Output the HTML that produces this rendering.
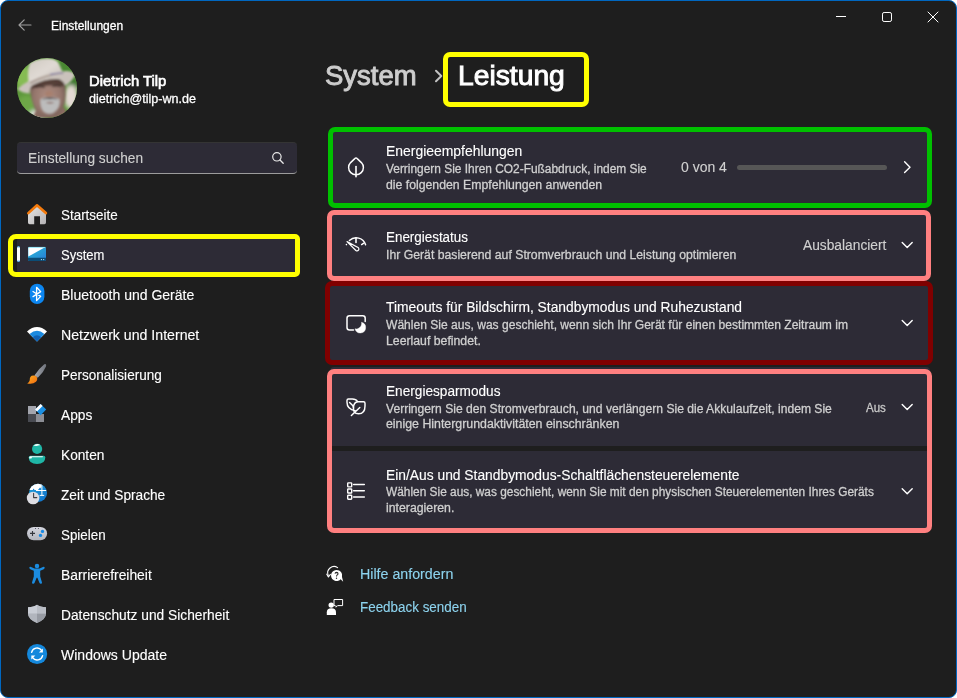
<!DOCTYPE html>
<html lang="de">
<head>
<meta charset="utf-8">
<title>Einstellungen – System › Leistung</title>
<style>
html,body{margin:0;padding:0;background:#fff}
body{width:957px;height:698px;overflow:hidden;position:relative;font-family:"Liberation Sans",sans-serif}
#frame{position:absolute;left:0;top:0;width:955px;height:696px;border:1px solid #0067c0;border-radius:8px;background:#1e1e1e}
#ui{position:absolute;left:0;top:0;width:957px;height:698px}
#ui *{box-sizing:border-box}
.t{position:absolute;white-space:nowrap;line-height:20px;color:#fff;transform-origin:0 50%;display:block;-webkit-text-stroke:0.12px currentColor}
.s12{-webkit-text-stroke:0.28px currentColor}
.abs{position:absolute}
svg{position:absolute;overflow:visible}
.card{position:absolute;left:330px;width:600px;background:#2d2b36;border-radius:4px}
.hl{position:absolute;border-style:solid;border-width:5px;border-radius:8px;pointer-events:none}
ul{list-style:none;margin:0;padding:0}
h1,p{margin:0;font-weight:normal}
a{text-decoration:none}
.sb{-webkit-text-stroke:0.95px currentColor}
.sb2{-webkit-text-stroke:0.6px currentColor}
</style>
</head>
<body>
<div id="frame"></div>
<div id="ui">

<!-- ===== title bar ===== -->
<header>
  <svg class="back" style="left:18px;top:19px" width="14" height="12" viewBox="0 0 14 12"><path d="M6.2 0.8 L1 6 L6.2 11.2 M1.2 6 H13" fill="none" stroke="#9d9d9d" stroke-width="1.2" stroke-linecap="round" stroke-linejoin="round"/></svg>
  <span class="t s12" id="tb" style="left:51.00px;top:16.14px;font-size:12px;transform:scaleX(1.0005);">Einstellungen</span>
  <svg style="left:830px;top:6px" width="120" height="22" viewBox="830 6 120 22">
    <path d="M836 16.5 H846" stroke="#fff" stroke-width="1"/>
    <rect x="882.5" y="12.5" width="9" height="9" rx="1.6" fill="none" stroke="#fff" stroke-width="1"/>
    <path d="M928 12 L938 22 M938 12 L928 22" stroke="#fff" stroke-width="1" stroke-linecap="round"/>
  </svg>
</header>

<!-- ===== sidebar ===== -->
<aside>
  <section class="profile">
    <!--AVATAR_BEGIN-->
<svg class="avatar" style="left:17px;top:58px" width="60" height="60" viewBox="0 0 60 60">
  <defs>
    <clipPath id="cAv"><circle cx="30" cy="30" r="30"/></clipPath>
    <radialGradient id="gFace" cx="0.5" cy="0.5" r="0.62"><stop offset="0" stop-color="#b08e82"/><stop offset="0.6" stop-color="#94766c"/><stop offset="1" stop-color="#66504a"/></radialGradient>
    <linearGradient id="gHat" x1="0" y1="0" x2="1" y2="1"><stop offset="0" stop-color="#cfc8c0"/><stop offset="0.5" stop-color="#e0dad4"/><stop offset="1" stop-color="#c2bab4"/></linearGradient>
    <filter id="fBlur" x="-10%" y="-10%" width="120%" height="120%"><feGaussianBlur stdDeviation="0.8"/></filter>
    <filter id="fBlur2" x="-20%" y="-20%" width="140%" height="140%"><feGaussianBlur stdDeviation="2.2"/></filter>
  </defs>
  <g clip-path="url(#cAv)">
    <rect width="60" height="60" fill="#5c963a"/>
    <g filter="url(#fBlur2)">
      <ellipse cx="7" cy="20" rx="9" ry="12" fill="#86bc52"/>
      <ellipse cx="10" cy="46" rx="10" ry="9" fill="#6ea846"/>
      <ellipse cx="50" cy="9" rx="10" ry="9" fill="#4a8830"/>
      <ellipse cx="56" cy="26" rx="6" ry="7" fill="#3a782a"/>
      <ellipse cx="54" cy="39" rx="7" ry="12" fill="#e4dad4"/>
      <ellipse cx="20" cy="57" rx="8" ry="5" fill="#e8e8e8"/>
    </g>
    <g filter="url(#fBlur)">
      <path d="M16 60 Q18 51 23 49 H46 Q50 52 50 60 Z" fill="#8a6c62"/>
      <!-- face -->
      <path d="M12.500 28 Q11.500 19 22 17 H41 Q49 19 48.500 30 Q49.500 44 45 52 Q40 60 31 60 Q22 60 17.500 50 Q13.500 40 12.500 28 Z" fill="url(#gFace)"/>
      <!-- shadow under brim / eyes -->
      <path d="M13.500 24 Q30 17 47.500 21 L48 28 Q30 25.500 14 31 Z" fill="#46322c" opacity="0.8"/>
      <path d="M18 29.500 Q23 27.500 28 29.500 M35 28.500 Q40 27 45 28.500" stroke="#2e2220" stroke-width="1.300" fill="none" opacity="0.8"/>
      <ellipse cx="32" cy="36" rx="3.600" ry="3.200" fill="#a8806e"/>
      <!-- beard -->
      <path d="M23.500 41 Q32 36.500 42.500 41 Q44 50 36 55 Q31 57 26.500 53.500 Q22.500 48 23.500 41 Z" fill="#bcbcbc"/>
      <path d="M24.500 41.500 Q32.500 36.800 41.500 41.500 Q37 40.600 33 41.200 Q28 40.800 24.500 41.500 Z" fill="#564a4a"/>
      <path d="M28.500 44.600 Q33 43.200 37.500 44.600 Q33 46.600 28.500 44.600 Z" fill="#86625a"/>
      <!-- hat brim -->
      <path d="M0.500 31 Q8 23.500 22 19 Q38 13.500 50 13 Q57 13.500 58 17 Q55 24 48 27.500 Q46 21.500 40 21 Q28 20.500 16 27 Q12 29.500 12.500 35.500 Q5 35 0.500 31 Z" fill="#cac2bc"/>
      <!-- hat crown -->
      <path d="M11.500 24 Q10 10 13 5 Q20 0 32 0.500 Q40 1 42 6 L46 15 Q30 15.500 11.500 24 Z" fill="url(#gHat)"/>
      <!-- hat band shadow -->
      <path d="M13 24 Q28 15.500 46 14.200 L46.400 15.600 Q28 17.500 13.200 26 Z" fill="#8a7468" opacity="0.55"/>
      <path d="M33 15.800 Q40 14.400 46 14.200 L46.400 15.600 Q40 15.800 33.400 17.200 Z" fill="#7670a8" opacity="0.8"/>
    </g>
  </g>
</svg>
<!--AVATAR_END-->
    <span class="t sb2" id="pn" style="left:89.00px;top:71.15px;font-size:14px;transform:scaleX(1.0565);">Dietrich Tilp</span>
    <span class="t s12" id="pe" style="left:89.00px;top:88.64px;font-size:12px;transform:scaleX(1.0459);">dietrich@tilp-wn.de</span>
  </section>

  <div class="abs search" style="left:17px;top:142px;width:280px;height:32px;background:#2d2b36;border-radius:4px;border-top:1px solid #343434;border-bottom:1px solid #9c9c9c"></div>
  <span class="t " id="sr" style="left:28.00px;top:148.15px;font-size:14px;color:#cfcfcf;transform:scaleX(0.9790);">Einstellung suchen</span>
  <svg style="left:270px;top:150px" width="16" height="16" viewBox="270 150 16 16"><circle cx="276.9" cy="156.8" r="4.2" fill="none" stroke="#e8e8e8" stroke-width="1.2"/><path d="M280 160 L283.2 163.2" stroke="#e8e8e8" stroke-width="1.3" stroke-linecap="round"/></svg>

  <nav>
    <div class="abs sel" style="left:17px;top:237px;width:280px;height:37px;background:#2d2b36;border-radius:4px"></div>
    <div class="abs pill" style="left:17px;top:246px;width:3px;height:16px;border-radius:1.5px;background:linear-gradient(#3aa0f0 0,#fff 14%,#fff 86%,#3aa0f0 100%)"></div>
    <ul>
      <li><span class="t " id="n0" style="left:61.00px;top:205.15px;font-size:14px;transform:scaleX(0.9579);">Startseite</span></li>
      <li><span class="t " id="n1" style="left:61.00px;top:245.15px;font-size:14px;transform:scaleX(0.9299);">System</span></li>
      <li><span class="t " id="n2" style="left:61.00px;top:285.15px;font-size:14px;transform:scaleX(1.0013);">Bluetooth und Geräte</span></li>
      <li><span class="t " id="n3" style="left:61.00px;top:325.15px;font-size:14px;transform:scaleX(1.0097);">Netzwerk und Internet</span></li>
      <li><span class="t " id="n4" style="left:61.00px;top:365.15px;font-size:14px;transform:scaleX(0.9657);">Personalisierung</span></li>
      <li><span class="t " id="n5" style="left:61.00px;top:405.15px;font-size:14px;transform:scaleX(0.9805);">Apps</span></li>
      <li><span class="t " id="n6" style="left:61.00px;top:445.15px;font-size:14px;transform:scaleX(0.9783);">Konten</span></li>
      <li><span class="t " id="n7" style="left:61.00px;top:485.15px;font-size:14px;transform:scaleX(0.9776);">Zeit und Sprache</span></li>
      <li><span class="t " id="n8" style="left:61.00px;top:525.15px;font-size:14px;transform:scaleX(0.9540);">Spielen</span></li>
      <li><span class="t " id="n9" style="left:61.00px;top:565.15px;font-size:14px;transform:scaleX(0.9881);">Barrierefreiheit</span></li>
      <li><span class="t " id="n10" style="left:61.00px;top:605.15px;font-size:14px;transform:scaleX(0.9826);">Datenschutz und Sicherheit</span></li>
      <li><span class="t " id="n11" style="left:61.00px;top:645.15px;font-size:14px;transform:scaleX(1.0014);">Windows Update</span></li>
    </ul>
    <!--NAVICONS_BEGIN-->
<svg class="navicons" style="left:20px;top:196px" width="36" height="480" viewBox="20 196 36 480">
  <defs>
    <linearGradient id="gHome" x1="0" y1="0" x2="1" y2="1"><stop offset="0" stop-color="#e6e6e4"/><stop offset="1" stop-color="#b4b2b4"/></linearGradient>
    <linearGradient id="gSys" x1="0" y1="0" x2="1" y2="1"><stop offset="0" stop-color="#2fb4dc"/><stop offset="0.55" stop-color="#279ad6"/><stop offset="1" stop-color="#2b78d8"/></linearGradient>
    <linearGradient id="gBrush" x1="0" y1="0" x2="1" y2="0"><stop offset="0" stop-color="#a4a8b0"/><stop offset="1" stop-color="#6e727a"/></linearGradient>
    <linearGradient id="gTip" x1="0" y1="0" x2="1" y2="1"><stop offset="0" stop-color="#ffb020"/><stop offset="1" stop-color="#f06a10"/></linearGradient>
    <linearGradient id="gPad" x1="0" y1="0" x2="0" y2="1"><stop offset="0" stop-color="#d4d6de"/><stop offset="1" stop-color="#b4b6be"/></linearGradient>
    <linearGradient id="gGlobe" x1="0" y1="0" x2="1" y2="1"><stop offset="0" stop-color="#23a4dc"/><stop offset="1" stop-color="#0f6ec8"/></linearGradient>
    <clipPath id="cGlobe"><circle cx="38" cy="492.9" r="9.1"/></clipPath>
  </defs>
  <!-- Startseite -->
  <g>
    <path d="M28 212.6 L37 205.6 L46 212.6 V222.6 Q46 224.2 44.4 224.2 H40 V216.2 H34.2 V224.2 H29.6 Q28 224.2 28 222.6 Z" fill="url(#gHome)"/>
    <path d="M28.3 213.100 L37 205.300 L45.900 213.100" fill="none" stroke="#f47a0c" stroke-width="2.6" stroke-linecap="round" stroke-linejoin="round"/>
  </g>
  <!-- System -->
  <g>
    <rect x="28" y="247" width="18" height="14" rx="1.4" fill="url(#gSys)"/>
    <path d="M28 257.8 H46 V259.6 Q46 261 44.6 261 H29.4 Q28 261 28 259.6 Z" fill="#0b4c76"/>
    <path d="M28.3 248 Q28.3 247.3 29 247.3 H45 L28.3 256.6 Z" fill="#fff"/>
    <path d="M28.6 247.4 H45.4" stroke="#8fe6f6" stroke-width="0.8"/>
    <rect x="40.9" y="259" width="1.1" height="1.1" fill="#a8d4ec"/><rect x="43.1" y="259" width="1.1" height="1.1" fill="#a8d4ec"/>
  </g>
  <!-- Bluetooth -->
  <g>
    <rect x="29.8" y="283.7" width="14.6" height="20.4" rx="7.3" fill="#0c86f0"/>
    <path d="M33 291.5 L40.7 296.4 L36.6 300.6 V287.3 L40.7 291.6 L33 296.6" fill="none" stroke="#fff" stroke-width="1.3" stroke-linejoin="round" stroke-linecap="round"/>
  </g>
  <!-- Netzwerk -->
  <g>
    <path d="M37 341.4 L27 331.4 Q37 322.6 47 331.4 Z" fill="#fff"/>
    <path d="M37 341.4 L29.6 334 Q37 327.6 44.4 334 Z" fill="#1b8ae0"/>
    <path d="M37 341.4 L32.9 337.3 Q37 333.4 41.1 337.3 Z" fill="#0f62b6"/>
  </g>
  <!-- Personalisierung -->
  <g>
    <path d="M45.500 364.100 Q46.600 364.800 46 366.500 Q43.400 372.800 37.800 377.800 L34.400 375.400 Q38.800 368.600 44 364.400 Q44.800 363.700 45.500 364.100 Z" fill="url(#gBrush)"/>
    <path d="M31.6 375.8 Q34.6 374.6 36.6 376.8 Q38.2 379.4 36 381.8 Q32.6 384.8 27.2 383.4 Q30.2 381.6 29.8 378.8 Q30 376.6 31.6 375.8 Z" fill="url(#gTip)"/>
  </g>
  <!-- Apps -->
  <g>
    <rect x="28" y="406" width="8" height="8" fill="#a3a5ad"/>
    <rect x="28" y="414" width="8" height="8" fill="#494b52"/>
    <rect x="36" y="414" width="8" height="8" fill="#8c8e95"/>
    <path d="M40.6 404 L46.2 409.6 L40.6 415.2 L35 409.6 Z" fill="#1a8fe2"/>
    <path d="M40.6 404 L42.6 406 L37 411.6 L35 409.6 Z" fill="#fff"/>
  </g>
  <!-- Konten -->
  <g>
    <circle cx="37.1" cy="448.9" r="5.1" fill="#1fb6a6"/>
    <path d="M33.3 445.6 Q36.6 442.6 40.4 445 L36.2 446 Z" fill="#fff"/>
    <path d="M30.4 455.8 H43.6 Q45.3 455.8 45.3 457.6 Q45.3 464.1 37 464.1 Q28.7 464.1 28.7 457.6 Q28.7 455.8 30.4 455.8 Z" fill="#1fb6a6"/>
    <path d="M29.2 457.4 Q29.4 456.2 30.6 456.2 H43 L42.6 457.2 H32 L31.4 458.4 H29.2 Z" fill="#fff"/>
  </g>
  <!-- Zeit und Sprache -->
  <g>
    <circle cx="38" cy="492.9" r="9.1" fill="url(#gGlobe)"/>
    <g clip-path="url(#cGlobe)">
      <path d="M28 483 H41.4 V487 L38.6 490 H28 Z" fill="#fff"/>
      <path d="M36 490.5 H46.4 M41.9 483.6 V495.4 M39.6 495.4 H44.2" stroke="#fff" stroke-width="1" fill="none"/>
      <circle cx="33.6" cy="489.4" r="0.7" fill="#1a86d4"/>
      <path d="M38 490 L40 487.4 V490 Z" fill="#1a86d4"/>
    </g>
    <circle cx="33.1" cy="498" r="6.3" fill="#dddde2"/>
    <path d="M33.6 493.4 V497.6 H36.8" fill="none" stroke="#404044" stroke-width="1.1" stroke-linecap="round" stroke-linejoin="round"/>
  </g>
  <!-- Spielen -->
  <g>
    <rect x="27" y="526.9" width="20.1" height="13.3" rx="6.65" fill="url(#gPad)"/>
    <path d="M30 533.4 H35 M32.5 530.9 V535.9" stroke="#34363c" stroke-width="1.1"/>
    <circle cx="42.5" cy="531.4" r="1.65" fill="#1488e4"/><circle cx="40.5" cy="535.4" r="1.65" fill="#1488e4"/>
    <circle cx="35.5" cy="528.5" r="0.55" fill="#4a4658"/><circle cx="38.4" cy="528.5" r="0.55" fill="#4a4658"/>
  </g>
  <!-- Barrierefreiheit -->
  <g fill="#1b8ce0">
    <circle cx="37" cy="565.9" r="2.25"/>
    <path d="M29.4 568.2 Q29 566.8 30.4 566.8 Q32 567.2 34.4 568.6 H39.6 Q42 567.2 43.6 566.8 Q45 566.8 44.6 568.2 Q44.2 569.2 40.2 570.8 V576.6 L42 582.4 Q42.2 583.8 40.8 583.8 Q39.8 583.8 39.4 582.8 L37.4 577.8 H36.6 L34.6 582.8 Q34.2 583.8 33.2 583.8 Q31.8 583.8 32 582.4 L33.8 576.6 V570.8 Q29.8 569.2 29.4 568.2 Z"/>
  </g>
  <!-- Datenschutz -->
  <g>
    <path d="M37 604.8 Q40 607 46 607.2 V613.6 Q46 619.6 37 622.9 Q28 619.6 28 613.6 V607.2 Q34 607 37 604.8 Z" fill="#a9adb5"/>
    <path d="M37 604.8 Q34 607 28 607.2 V613.8 H37 Z" fill="#c9cdd5"/>
    <path d="M37 604.8 Q40 607 46 607.2 V613.8 H37 Z" fill="#b9bdc5"/>
    <path d="M37 613.8 H28 Q28.2 619.6 37 622.9 Z" fill="#b1b5bd"/>
    <path d="M37 613.8 H46 Q45.8 619.6 37 622.9 Z" fill="#979ba3"/>
  </g>
  <!-- Windows Update -->
  <g>
    <circle cx="37.1" cy="654" r="10.1" fill="#1488dc"/>
    <path d="M31.6 652.4 A5.6 5.6 0 0 1 41.6 650.4" fill="none" stroke="#fff" stroke-width="1.4" stroke-linecap="round"/>
    <path d="M42.9 648.4 V652.4 H38.9 Z" fill="#fff"/>
    <path d="M42.6 655.6 A5.6 5.6 0 0 1 32.6 657.6" fill="none" stroke="#fff" stroke-width="1.4" stroke-linecap="round"/>
    <path d="M31.3 659.6 V655.6 H35.3 Z" fill="#fff"/>
  </g>
</svg>
<!--NAVICONS_END-->
  </nav>
</aside>

<!-- ===== main ===== -->
<main>
  <h1><span class="t sb" id="h1a" style="left:325.40px;top:66.44px;font-size:27.3px;color:#cdcdcd;transform:scaleX(1.0062);">System</span><span class="t sb" id="h1b" style="left:458.30px;top:66.44px;font-size:27.3px;transform:scaleX(1.0352);">Leistung</span></h1>
  <svg style="left:434px;top:69px" width="10" height="14" viewBox="434 69 10 14"><path d="M436 70.8 L441.3 76 L436 81.2" fill="none" stroke="#c2c2c2" stroke-width="2" stroke-linecap="round" stroke-linejoin="round"/></svg>

  <section class="card" style="top:129px;height:78px"></section>
  <section class="card" style="top:212px;height:67px"></section>
  <section class="card" style="top:283px;height:80px"></section>
  <section class="card" style="top:367px;height:79px;border-radius:4px 4px 0 0"></section>
  <section class="card" style="top:450.6px;height:80px;border-radius:0 0 4px 4px"></section>

  <span class="t " id="c1t" style="left:386.00px;top:141.15px;font-size:14px;transform:scaleX(0.9940);">Energieempfehlungen</span><span class="t s12" id="c1a" style="left:386.00px;top:159.14px;font-size:12px;color:#d0d0d0;transform:scaleX(0.9922);">Verringern Sie Ihren CO2-Fußabdruck, indem Sie</span><span class="t s12" id="c1b" style="left:386.00px;top:174.84px;font-size:12px;color:#d0d0d0;transform:scaleX(1.0221);">die folgenden Empfehlungen anwenden</span><span class="t " id="c1v" style="left:681.32px;top:157.45px;font-size:14px;color:#d0d0d0;transform:scaleX(0.9990);">0 von 4</span>
  <div class="abs bar" style="left:737px;top:164.5px;width:150px;height:5px;border-radius:2.5px;background:#565656"></div>
  <span class="t " id="c2t" style="left:386.00px;top:227.15px;font-size:14px;transform:scaleX(0.9573);">Energiestatus</span><span class="t s12" id="c2a" style="left:386.00px;top:244.64px;font-size:12px;color:#d0d0d0;transform:scaleX(1.0196);">Ihr Gerät basierend auf Stromverbrauch und Leistung optimieren</span><span class="t " id="c2v" style="left:803.00px;top:235.35px;font-size:14px;color:#d0d0d0;transform:scaleX(0.9830);">Ausbalanciert</span>
  <span class="t " id="c3t" style="left:386.00px;top:296.75px;font-size:14px;transform:scaleX(0.9874);">Timeouts für Bildschirm, Standbymodus und Ruhezustand</span><span class="t s12" id="c3a" style="left:386.00px;top:315.04px;font-size:12px;color:#d0d0d0;transform:scaleX(1.0053);">Wählen Sie aus, was geschieht, wenn sich Ihr Gerät für einen bestimmten Zeitraum im</span><span class="t s12" id="c3b" style="left:386.00px;top:330.64px;font-size:12px;color:#d0d0d0;transform:scaleX(1.0223);">Leerlauf befindet.</span>
  <span class="t " id="c4t" style="left:386.00px;top:380.85px;font-size:14px;transform:scaleX(0.9740);">Energiesparmodus</span><span class="t s12" id="c4a" style="left:386.00px;top:398.64px;font-size:12px;color:#d0d0d0;transform:scaleX(1.0081);">Verringern Sie den Stromverbrauch, und verlängern Sie die Akkulaufzeit, indem Sie</span><span class="t s12" id="c4b" style="left:386.00px;top:414.24px;font-size:12px;color:#d0d0d0;transform:scaleX(1.0289);">einige Hintergrundaktivitäten einschränken</span><span class="t s12" id="c4v" style="left:866.00px;top:398.04px;font-size:12px;color:#c8c8c8;transform:scaleX(0.9586);">Aus</span>
  <span class="t " id="c5t" style="left:386.00px;top:465.15px;font-size:14px;transform:scaleX(0.9872);">Ein/Aus und Standbymodus-Schaltflächensteuerelemente</span><span class="t s12" id="c5a" style="left:386.00px;top:482.44px;font-size:12px;color:#d0d0d0;transform:scaleX(0.9897);">Wählen Sie aus, was geschieht, wenn Sie mit den physischen Steuerelementen Ihres Geräts</span><span class="t s12" id="c5b" style="left:386.00px;top:498.44px;font-size:12px;color:#d0d0d0;transform:scaleX(1.0242);">interagieren.</span>

  <!--CARDICONS_BEGIN-->
<svg class="cardicons" style="left:320px;top:150px" width="600" height="470" viewBox="320 150 600 470">
  <g fill="none" stroke="#fff" stroke-width="1.45" stroke-linecap="round" stroke-linejoin="round">
    <!-- leaf -->
    <path d="M356 158 Q356.6 158 357.2 158.6 L361.4 162.6 Q363.4 164.8 363.4 167.4 A7.4 7.4 0 0 1 348.600 167.4 Q348.600 164.800 350.600 162.600 L354.800 158.600 Q355.400 158 356 158 Z"/>
    <path d="M356 166.600 V176.800" stroke-width="1.6"/>
    <!-- gauge -->
    <path d="M349.400 240.600 A9.800 9.800 0 0 1 365.600 244.800"/>
    <path d="M356 238 V242.400" stroke-width="1.6"/>
    <path d="M361.600 244.600 L363.800 243.200"/>
    <path d="M347 241.600 L358.100 247.500 A1.800 1.800 0 0 1 355.900 250.500 Z" stroke-width="1.200"/>
    <!-- screen + moon -->
    <path d="M365.200 321.500 V318.200 Q365.200 315.700 362.700 315.700 H349.500 Q347 315.700 347 318.200 V327.400 Q347 329.900 349.500 329.900 H353.500" stroke-width="1.500"/>
    <!-- eco leaves -->
    <path d="M355.200 410.600 Q347 409.400 347 402.200 V400.400 Q347 399 348.400 399 H352.400 Q356 399 357.400 401.400"/>
    <path d="M349.600 402.400 L352.400 405.200 Q353.400 406.400 353.600 408"/>
    <path d="M357.800 401.800 H363.600 Q365 401.800 365 403.200 V406 Q365 413.800 358.600 413.800 Q352.800 413.800 353.400 407.600 Q353.800 402.200 357.800 401.800 Z"/>
    <path d="M359.800 407.400 L351.400 415.400"/>
  </g>
  <path d="M361.500 322.300 A5.400 5.400 0 1 1 355 328.800 A5.500 5.500 0 0 0 361.500 322.300 Z" fill="#fff" stroke="#fff" stroke-width="0.400"/>
  <circle cx="346.400" cy="244.600" r="0.800" fill="#fff"/>
  <!-- list -->
  <g fill="none" stroke="#fff">
    <rect x="347.700" y="482.900" width="4" height="4" rx="0.600" stroke-width="1.400"/>
    <rect x="347.700" y="489" width="4" height="4" rx="0.600" stroke-width="1.400"/>
    <rect x="347.700" y="495.200" width="4" height="4" rx="0.600" stroke-width="1.400"/>
    <path d="M353.600 484.400 H364.300 M353.600 490.700 H364.300 M353.600 497 H364.300" stroke-width="1.500" stroke-linecap="round"/>
  </g>
  <!-- chevrons -->
  <g fill="none" stroke="#fff" stroke-width="1.400" stroke-linecap="round" stroke-linejoin="round">
    <path d="M904.600 161.800 L910 167.200 L904.600 172.600"/>
    <path d="M902.200 242.600 L907.200 247.600 L912.200 242.600"/>
    <path d="M902.200 320.600 L907.200 325.600 L912.200 320.600"/>
    <path d="M902.200 404.400 L907.200 409.400 L912.200 404.400"/>
    <path d="M902.200 488.800 L907.200 493.800 L912.200 488.800"/>
  </g>
  <!-- help -->
  <g>
    <path d="M336.500 570 A5.500 5.500 0 1 0 340.600 579.200 L343.200 581.800 L342 577 A5.500 5.500 0 0 0 336.500 570 Z" fill="#fff"/>
    <path d="M337.600 567.600 A6.400 6.400 0 0 0 328.200 575.400" fill="none" stroke="#fff" stroke-width="1.100" stroke-linecap="round"/>
    <path d="M326.800 574.200 L328.400 577 L330.400 574.400" fill="none" stroke="#fff" stroke-width="1.100" stroke-linecap="round" stroke-linejoin="round"/>
    <path d="M335 573.600 Q335.200 572.400 336.600 572.400 Q338 572.500 338 573.700 Q338 574.600 337.100 575.100 Q336.500 575.500 336.500 576.400" fill="none" stroke="#2a2a2a" stroke-width="1.100"/>
    <circle cx="336.500" cy="578.200" r="0.700" fill="#2a2a2a"/>
  </g>
  <!-- feedback -->
  <g>
    <circle cx="331.200" cy="605.100" r="2.700" fill="#fff"/>
    <path d="M326.800 614.900 V612.200 Q326.800 608.200 331.400 608.200 Q336 608.200 336 612.200 V614.900 Z" fill="#fff"/>
    <path d="M335.400 605.600 H334 V599.500 H342.600 V605.600 H337.600 L336 607.200 V605.600" fill="none" stroke="#fff" stroke-width="1" stroke-linejoin="miter"/>
  </g>
</svg>
<!--CARDICONS_END-->

  <a><span class="t " id="l1" style="left:360.00px;top:563.95px;font-size:14px;color:#8dd3ee;transform:scaleX(1.0161);">Hilfe anfordern</span></a>
  <a><span class="t " id="l2" style="left:360.00px;top:596.85px;font-size:14px;color:#8dd3ee;transform:scaleX(0.9581);">Feedback senden</span></a>
</main>

<!-- ===== annotation highlight frames ===== -->
<div class="hl" style="left:443px;top:52px;width:146px;height:55px;border-color:#ffff00;border-radius:7px"></div>
<div class="hl" style="left:8px;top:234px;width:292px;height:43px;border-color:#ffff00;border-radius:8px 5px 5px 8px"></div>
<div class="hl" style="left:328px;top:127px;width:604px;height:81px;border-color:#00c000;border-radius:7px"></div>
<div class="hl" style="left:327px;top:210px;width:604px;height:71px;border-color:#ff8080;border-radius:7px"></div>
<div class="hl" style="left:327px;top:369px;width:605px;height:164px;border-color:#ff8080;border-radius:7px"></div>
<div class="hl" style="left:325px;top:281px;width:608px;height:84px;border-color:#800000;border-radius:7px"></div>

</div>
</body>
</html>
